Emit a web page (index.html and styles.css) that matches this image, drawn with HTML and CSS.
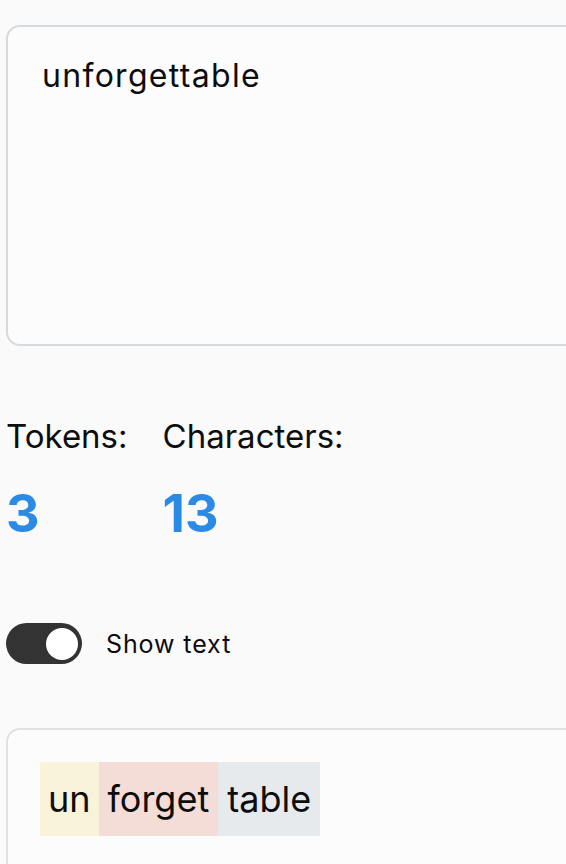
FILE: index.html
```html
<!DOCTYPE html>
<html>
<head>
<meta charset="utf-8">
<link rel="stylesheet" href="styles.css">
</head>
<body>
<div class="page">
  <div class="input-box">unforgettable</div>
  <div class="stats">
    <div class="stat">
      <div class="stat-label">Tokens:</div>
      <div class="stat-value">3</div>
    </div>
    <div class="stat">
      <div class="stat-label">Characters:</div>
      <div class="stat-value">13</div>
    </div>
  </div>
  <div class="toggle-row">
    <div class="toggle"><div class="knob"></div></div>
    <span class="toggle-label">Show text</span>
  </div>
  <div class="output-box">
    <div class="tokens"><span class="tok t1">un</span><span class="tok t2">forget</span><span class="tok t3">table</span></div>
  </div>
</div>
</body>
</html>
```

FILE: styles.css
```css
html, body {
  margin: 0;
  padding: 0;
  background: #fafafa;
  overflow: hidden;
  height: 864px;
}
.page {
  padding: 25px 0 0 6px;
  font-family: Inter, "Noto Sans", sans-serif;
  color: #0d0d0d;
  width: 620px;
}
.input-box {
  box-sizing: border-box;
  height: 321px;
  border: 2px solid #d5dadf;
  border-radius: 14px;
  background: #fcfcfc;
  padding: 27px 0 0 34px;
  font-size: 32px;
  letter-spacing: 1.3px;
  line-height: 44px;
}
.stats {
  display: flex;
  gap: 35px;
  margin-top: 69px;
}
.stat-label {
  font-size: 33px;
  line-height: 42px;
}
.stat-value {
  margin-top: 29px;
  font-size: 52px;
  font-weight: 700;
  line-height: 56px;
  color: #2b8ae6;
}
.toggle-row {
  display: flex;
  align-items: center;
  gap: 24px;
  margin-top: 81px;
}
.toggle {
  box-sizing: border-box;
  width: 76px;
  height: 41px;
  border-radius: 21px;
  background: #333333;
  display: flex;
  justify-content: flex-end;
  align-items: center;
  padding-right: 4px;
}
.knob {
  width: 32px;
  height: 32px;
  border-radius: 50%;
  background: #ffffff;
}
.toggle-label {
  font-size: 25px;
  letter-spacing: 0.9px;
}
.output-box {
  margin-top: 64px;
  box-sizing: border-box;
  height: 200px;
  border: 2px solid #dfe2e5;
  border-radius: 14px;
  background: #fcfcfc;
  padding: 32px 0 0 32px;
}
.tokens {
  display: flex;
}
.tok {
  font-size: 36px;
  line-height: 74px;
  padding: 0 9px;
}
.t1 { background: #f9f3d9; padding: 0 8px; }
.t2 { background: #f4ddd6; }
.t3 { background: #e7eaed; }
```
